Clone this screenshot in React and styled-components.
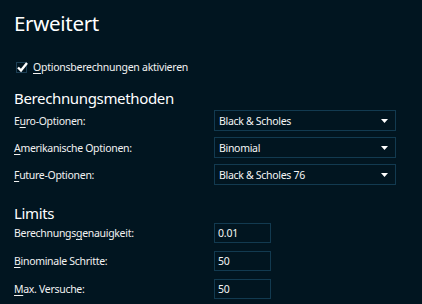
import React from "react";
import styled, { createGlobalStyle } from "styled-components";

const Global = createGlobalStyle`
  html, body { margin: 0; padding: 0; background: #011520; }
  body { font-family: "Noto Sans", "Open Sans", sans-serif; color: #f2f2f2; }
  * { box-sizing: border-box; }
`;

const Page = styled.div`
  width: 422px;
  height: 304px;
  background: #011520;
  padding: 9px 0 0 14px;
  overflow: hidden;
`;

const Title = styled.h1`
  margin: 0;
  font-weight: 400;
  font-size: 20.5px;
  letter-spacing: -0.3px;
  line-height: 28px;
  color: #ffffff;
`;

const CheckRow = styled.label`
  display: flex;
  align-items: center;
  gap: 6px;
  margin: 23px 0 0 2px;
  font-size: 10.5px;
  letter-spacing: -0.25px;
  line-height: 14px;
`;

const Box = styled.span`
  width: 11px;
  height: 11px;
  border: 1px solid #1d3f55;
  position: relative;
  flex: none;
`;

const Check = styled.svg`
  position: absolute;
  left: -1px;
  top: -2px;
`;

const Section = styled.h2`
  margin: ${(p) => p.$top}px 0 0 0;
  font-weight: 400;
  font-size: 15px;
  letter-spacing: -0.35px;
  line-height: 20px;
  color: #ffffff;
`;

const Grid = styled.div`
  display: grid;
  grid-template-columns: 200px auto;
  row-gap: ${(p) => p.$gap}px;
  margin-top: ${(p) => p.$top}px;
  align-items: center;
`;

const Label = styled.span`
  font-size: 10.5px;
  letter-spacing: -0.3px;
  line-height: 14px;
  white-space: nowrap;
`;

const U = styled.span`
  text-decoration: underline;
  text-underline-offset: 2px;
`;

const Select = styled.div`
  width: 182px;
  height: 21px;
  border: 1px solid #123a50;
  display: flex;
  align-items: center;
  justify-content: space-between;
  padding: 0 7px 0 4px;
  font-size: 10.5px;
  letter-spacing: -0.3px;
  color: #f5f5f5;
`;

const Input = styled.div`
  width: 57px;
  height: 20px;
  border: 1px solid #123a50;
  display: flex;
  align-items: center;
  padding: 0 3px;
  font-size: 10.5px;
  letter-spacing: -0.2px;
  color: #f5f5f5;
`;

const Arrow = () => (
  <svg width="7" height="4" viewBox="0 0 7 4">
    <path d="M0 0H7L3.5 4Z" fill="#ffffff" />
  </svg>
);

const methods = [
  { pre: "E", u: "u", post: "ro-Optionen:", value: "Black & Scholes" },
  { pre: "", u: "A", post: "merikanische Optionen:", value: "Binomial" },
  { pre: "", u: "F", post: "uture-Optionen:", value: "Black & Scholes 76" },
];

const limits = [
  { pre: "Berechnungs", u: "g", post: "enauigkeit:", value: "0.01" },
  { pre: "", u: "B", post: "inominale Schritte:", value: "50" },
  { pre: "", u: "M", post: "ax. Versuche:", value: "50" },
];

export default function App() {
  return (
    <Page>
      <Global />
      <Title>Erweitert</Title>
      <CheckRow>
        <Box>
          <Check width="13" height="13" viewBox="0 0 13 13">
            <path d="M2 6.5L5 9.5L11 2" stroke="#ffffff" strokeWidth="2.4" fill="none" />
          </Check>
        </Box>
        <span>
          <U>O</U>ptionsberechnungen aktivieren
        </span>
      </CheckRow>
      <Section $top={14}>Berechnungsmethoden</Section>
      <Grid $gap={6} $top={2}>
        {methods.map((m) => (
          <React.Fragment key={m.value}>
            <Label>
              {m.pre}
              <U>{m.u}</U>
              {m.post}
            </Label>
            <Select>
              <span>{m.value}</span>
              <Arrow />
            </Select>
          </React.Fragment>
        ))}
      </Grid>
      <Section $top={18}>Limits</Section>
      <Grid $gap={8} $top={0}>
        {limits.map((m, i) => (
          <React.Fragment key={i}>
            <Label>
              {m.pre}
              <U>{m.u}</U>
              {m.post}
            </Label>
            <Input>{m.value}</Input>
          </React.Fragment>
        ))}
      </Grid>
    </Page>
  );
}
